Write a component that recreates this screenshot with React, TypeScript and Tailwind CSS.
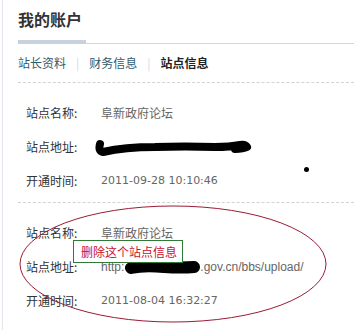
import React from 'react';

const cjk = '"Noto Sans CJK SC", "DejaVu Sans", sans-serif';
const latin = '"DejaVu Sans", "Noto Sans CJK SC", sans-serif';
const arial = '"Liberation Sans", "Noto Sans CJK SC", sans-serif';

type Row = { label: string; value: React.ReactNode };

const Scribble: React.FC<{ w: number; h: number; d: string; sw: number }> = ({ w, h, d, sw }) => (
  <svg width={w} height={h} viewBox={`0 0 ${w} ${h}`} className="inline-block align-middle">
    <path d={d} fill="none" stroke="#000" strokeWidth={sw} strokeLinecap="round" strokeLinejoin="round" />
  </svg>
);

const InfoRow: React.FC<Row> = ({ label, value }) => (
  <div className="flex items-center h-[34px]">
    <span className="w-[75px] text-[12px] text-[#333]" style={{ fontFamily: cjk }}>
      {label}
    </span>
    <span className="text-[11px] text-[#666] whitespace-nowrap flex items-center">{value}</span>
  </div>
);

const App: React.FC = () => {
  return (
    <div className="relative w-[354px] h-[330px] bg-white overflow-hidden">
      <div className="ml-[2px] h-full border-l border-[#e4e8ee] pl-[15px]">
        <h1 className="pt-[9px] h-[40px] text-[16px] font-bold leading-[20px] text-[#333]" style={{ fontFamily: cjk }}>
          我的账户
        </h1>

        <div className="flex items-end h-[4px]">
          <div className="w-[68px] h-[4px] bg-[#c9d0de]" />
          <div className="flex-1 h-[1px] bg-[#d3d6db]" />
        </div>

        <div className="flex items-center h-[38px] text-[12px] text-[#2f5a6e]" style={{ fontFamily: cjk }}>
          <span>站长资料</span>
          <span className="mx-[10px] text-[#d6d9dd]">|</span>
          <span>财务信息</span>
          <span className="mx-[10px] text-[#d6d9dd]">|</span>
          <span className="font-bold text-[#222]">站点信息</span>
        </div>

        <div className="border-t border-dashed border-[#cfd3d8] pl-[8px] pt-[13px] pb-[4px]">
          <InfoRow label="站点名称:" value={<span style={{ fontFamily: cjk }} className="text-[12px]">阜新政府论坛</span>} />
          <InfoRow
            label="站点地址:"
            value={
              <span className="relative flex items-center ml-[-6px]" style={{ fontFamily: latin }}>
                <Scribble w={158} h={18} sw={8} d="M5 6 Q3 13 8 14 Q30 9 60 9 Q90 8 120 9 Q135 9 145 7 Q150 6 152 9 Q148 11 140 11" />
              </span>
            }
          />
          <InfoRow label="开通时间:" value={<span style={{ fontFamily: latin }}>2011-09-28 10:10:46</span>} />
        </div>

        <div className="border-t border-dashed border-[#cfd3d8] pl-[8px] pt-[13px]">
          <InfoRow label="站点名称:" value={<span style={{ fontFamily: cjk }} className="text-[12px]">阜新政府论坛</span>} />
          <InfoRow
            label="站点地址:"
            value={
              <span className="flex items-center text-[12px]" style={{ fontFamily: arial }}>
                http:
                <Scribble w={76} h={16} sw={12} d="M7 9 Q20 6 40 8 Q58 9 70 8" />
                .gov.cn/bbs/upload/
              </span>
            }
          />
          <InfoRow label="开通时间:" value={<span style={{ fontFamily: latin }}>2011-08-04 16:32:27</span>} />
        </div>
      </div>

      <div className="absolute left-[304px] top-[167px] w-[5px] h-[5px] rounded-full bg-black" />

      <div
        className="absolute left-[73px] top-[240px] w-[110px] h-[23px] border border-[#2e7b37] bg-white text-[12px] leading-[21px] text-[#c8102e] pl-[7px] whitespace-nowrap"
        style={{ fontFamily: cjk }}
      >
        删除这个站点信息
      </div>

      <svg className="absolute left-0 top-0 pointer-events-none" width="354" height="330">
        <ellipse cx="173" cy="264" rx="153" ry="58" fill="none" stroke="#9b1b35" strokeWidth="1" />
      </svg>
    </div>
  );
};

export default App;
